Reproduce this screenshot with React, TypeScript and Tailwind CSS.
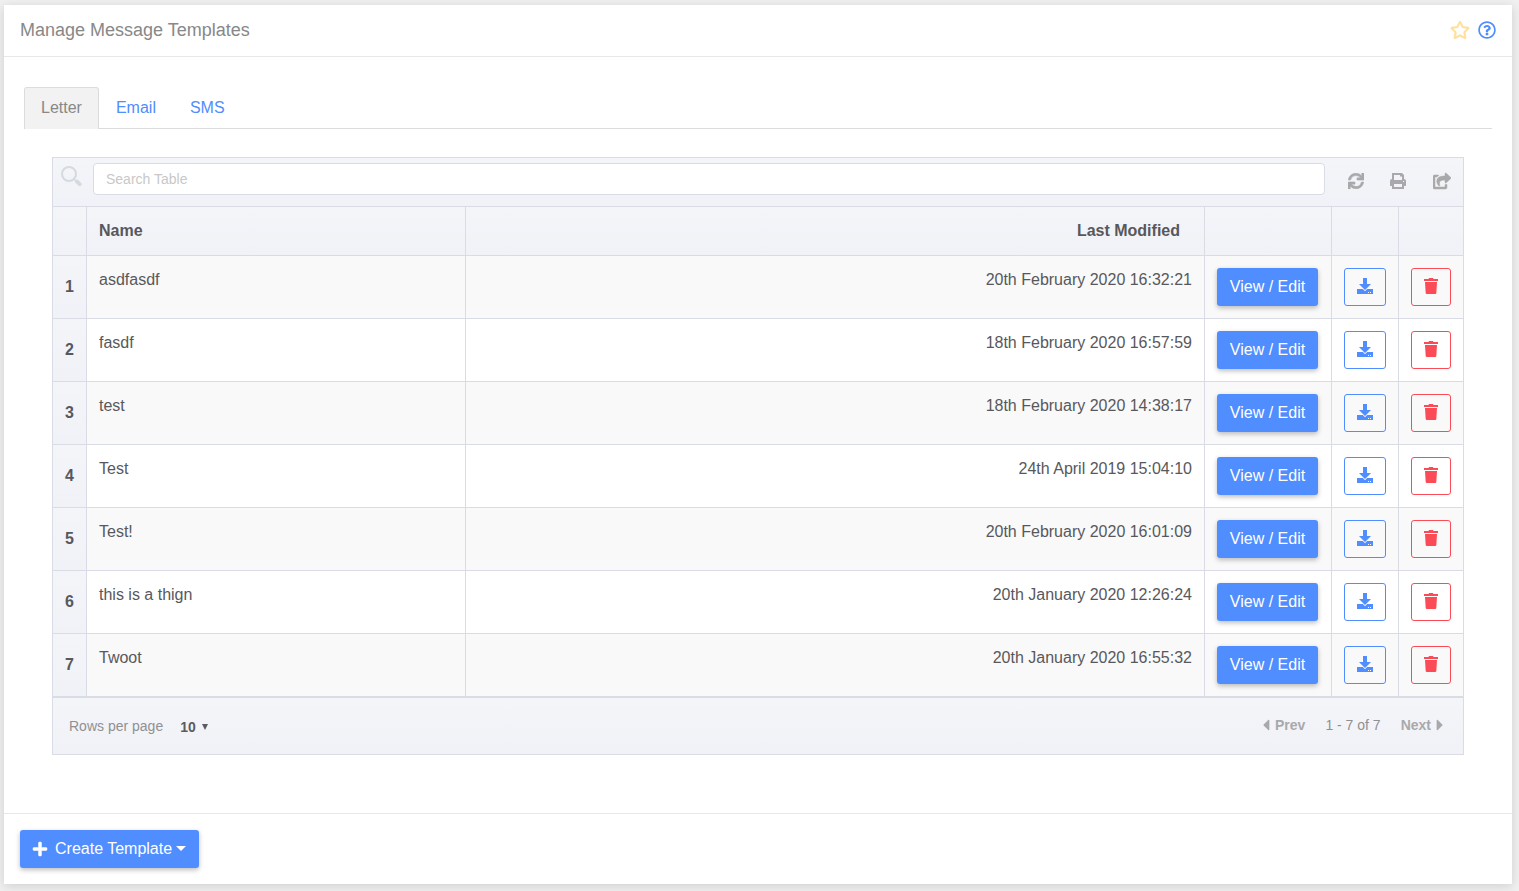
import {
  FaCaretLeft,
  FaCaretRight,
  FaPlus,
  FaRegQuestionCircle,
  FaRegStar,
  FaShareSquare,
  FaSync,
} from "react-icons/fa";

const templates = [
  { name: "asdfasdf", modified: "20th February 2020 16:32:21" },
  { name: "fasdf", modified: "18th February 2020 16:57:59" },
  { name: "test", modified: "18th February 2020 14:38:17" },
  { name: "Test", modified: "24th April 2019 15:04:10" },
  { name: "Test!", modified: "20th February 2020 16:01:09" },
  { name: "this is a thign", modified: "20th January 2020 12:26:24" },
  { name: "Twoot", modified: "20th January 2020 16:55:32" },
];

const primaryButton =
  "rounded-[3px] bg-[#508dfe] h-[38px] whitespace-nowrap text-white shadow-[0_2px_5px_rgba(0,0,0,0.26)]";
const iconButton = "flex h-[38px] w-full justify-center rounded-[3px] border pt-[9px]";
const shaded = "bg-linear-to-b from-[#f4f5f9] to-[#f1f2f7]";
const headCell = `border-r border-b border-[#d9dce5] ${shaded} px-3 py-3`;
const bodyCell = "border-r border-b border-[#d9dce5] px-3 py-3 align-top";

function DownloadIcon() {
  return (
    <svg viewBox="0 0 16 16" className="size-4" fill="currentColor" aria-hidden="true">
      <path d="M6 0h4v6h4l-6 6-6-6h4z" />
      <path
        fillRule="evenodd"
        d="M0 11h5.8L8 13.2 10.2 11H16v5H0zM11 14v1h1v-1zM13 14v1h1v-1z"
      />
    </svg>
  );
}

function TrashIcon() {
  return (
    <svg viewBox="0 0 14 16" className="h-4 w-[14px]" fill="currentColor" aria-hidden="true">
      <path d="M0 1h4.5L5 0h4l.5 1H14v2H0z" />
      <path d="M1 4h12l-.7 11q-.1 1-1.1 1H2.8q-1 0-1.1-1z" />
    </svg>
  );
}

function PrintIcon() {
  return (
    <svg viewBox="0 0 16 16" className="size-4" fill="currentColor" aria-hidden="true">
      <path
        fillRule="evenodd"
        d="M2 0h10l2 2v4q2 0 2 2v5h-2v3H2v-3H0V8q0-2 2-2zM4 2v5h8V3.5h-2V2zM4 11v3h8v-3zM13 8v1h1V8z"
      />
    </svg>
  );
}

function SearchIcon() {
  return (
    <svg viewBox="0 0 22 22" className="size-[22px]" fill="none" stroke="#d5d9e0" aria-hidden="true">
      <circle cx="8" cy="8" r="7" strokeWidth="2" />
      <path d="M13.2 13.2l2 2" strokeWidth="1.5" />
      <path d="M16 15.6l2.7 2.5" strokeWidth="4" strokeLinecap="round" />
    </svg>
  );
}

function Toolbar() {
  return (
    <div className={`flex h-[49px] items-start border-b border-[#d9dce5] ${shaded} pt-[5px] pr-3 pl-2`}>
      <label htmlFor="search" aria-label="Search" className="mt-[3px] mr-[10px] shrink-0">
        <SearchIcon />
      </label>
      <input
        id="search"
        type="text"
        aria-label="Search Table"
        placeholder="Search Table"
        className="h-8 min-w-0 flex-1 rounded-sm border border-[#d9dce5] bg-white px-3 text-sm outline-none placeholder:text-[#c8c8c8]"
      />
      <div className="ml-[21px] flex items-center gap-[22px] pt-[9px] text-[#a9a9ab]">
        <button type="button" aria-label="Refresh" className="flex w-5 justify-center">
          <FaSync size={16} stroke="currentColor" strokeWidth={20} />
        </button>
        <button type="button" aria-label="Print" className="flex w-5 justify-center">
          <PrintIcon />
        </button>
        <button type="button" aria-label="Export" className="flex w-[21px] justify-end">
          <FaShareSquare size={18} stroke="currentColor" strokeWidth={16} />
        </button>
      </div>
    </div>
  );
}

function TemplateTable() {
  return (
    <table className="w-full table-fixed border-separate border-spacing-0">
      <colgroup>
        <col className="w-[34px]" />
        <col className="w-[379px]" />
        <col />
        <col className="w-[127px]" />
        <col className="w-[67px]" />
        <col className="w-16" />
      </colgroup>
      <thead>
        <tr>
          <th className={headCell}></th>
          <th className={`${headCell} text-left`}>Name</th>
          <th className={`${headCell} pr-6 text-right`}>Last Modified</th>
          <th className={headCell}></th>
          <th className={headCell}></th>
          <th className={`border-b border-[#d9dce5] ${shaded}`}></th>
        </tr>
      </thead>
      <tbody>
        {templates.map((template, index) => (
          <tr key={template.name} className="odd:bg-[#f9f9f9]">
            <th className={`border-r border-b border-[#d9dce5] ${shaded} text-center`}>
              {index + 1}
            </th>
            <td className={bodyCell}>{template.name}</td>
            <td className={`${bodyCell} text-right`}>{template.modified}</td>
            <td className={bodyCell}>
              <button type="button" className={`${primaryButton} block w-[101px]`}>
                View / Edit
              </button>
            </td>
            <td className={bodyCell}>
              <button
                type="button"
                aria-label="Download"
                className={`${iconButton} border-[#508dfe] text-[#508dfe]`}
              >
                <DownloadIcon />
              </button>
            </td>
            <td className="border-b border-[#d9dce5] p-3 align-top">
              <button
                type="button"
                aria-label="Delete"
                className={`${iconButton} border-[#fb4b56] text-[#fb4b56]`}
              >
                <TrashIcon />
              </button>
            </td>
          </tr>
        ))}
      </tbody>
    </table>
  );
}

function Pagination() {
  return (
    <div className={`flex h-[57px] items-center justify-between border-t border-[#d9dce5] ${shaded} px-4 text-sm text-[#909092]`}>
      <div className="flex items-center">
        <label htmlFor="rows">Rows per page</label>
        <div className="relative ml-[17px] flex items-center">
          <select
            id="rows"
            defaultValue="10"
            className="w-8 appearance-none bg-transparent pt-px font-bold text-[#5b5b60] outline-none"
          >
            <option>10</option>
            <option>25</option>
            <option>50</option>
          </select>
          <svg
            viewBox="0 0 6 6"
            className="pointer-events-none absolute right-1 mt-px size-[6px] fill-[#5b5b60]"
            aria-hidden="true"
          >
            <path d="M0 0h6L3 6z" />
          </svg>
        </div>
      </div>
      <div className="flex items-center gap-5 pb-[2px]">
        <button type="button" className="flex items-center font-bold text-[#a9a9ab]">
          <FaCaretLeft size={18} />
          Prev
        </button>
        <span>1 - 7 of 7</span>
        <button type="button" className="flex items-center font-bold text-[#a9a9ab]">
          Next
          <FaCaretRight size={18} className="-mr-[2px]" />
        </button>
      </div>
    </div>
  );
}

export default function App() {
  return (
    <div className="min-h-screen bg-[#f0f0f0] pt-[5px] pr-[7px] pb-[7px] pl-1 font-['Liberation_Sans',Arial,sans-serif] text-base text-[#58585c]">
      <main className="bg-white shadow-[0_2px_10px_rgba(0,0,0,0.14)]">
        <header className="flex h-[52px] items-center justify-between border-b border-[#e8e8e8] px-4 pb-px">
          <h1 className="text-lg text-[#888]">Manage Message Templates</h1>
          <div className="flex items-center gap-2">
            <button type="button" aria-label="Add to favourites" className="text-[#ffe09a]">
              <FaRegStar size={20} stroke="currentColor" strokeWidth={12} />
            </button>
            <button type="button" aria-label="Help" className="text-[#508dfe]">
              <FaRegQuestionCircle size={18} />
            </button>
          </div>
        </header>

        <div className="px-5 pt-[30px] pb-[58px]">
          <nav className="flex border-b border-[#dcdcdc] text-[#508dfe]">
            <a
              href="#letter"
              className="-mb-px rounded-t-[3px] border border-b-0 border-[#dcdcdc] bg-[#f2f2f2] px-4 pt-2 pb-[9px] text-[#888]"
            >
              Letter
            </a>
            <a href="#email" className="border border-b-0 border-transparent px-4 py-2">
              Email
            </a>
            <a href="#sms" className="border border-b-0 border-transparent px-4 py-2">
              SMS
            </a>
          </nav>

          <section className="mx-7 mt-7 border border-[#d9dce5]">
            <Toolbar />
            <TemplateTable />
            <Pagination />
          </section>
        </div>

        <footer className="border-t border-[#e8e8e8] p-4">
          <button type="button" className={`${primaryButton} flex items-center px-3 pb-px`}>
            <FaPlus size={16} className="mr-[7px]" stroke="currentColor" strokeWidth={16} />
            Create Template
            <svg viewBox="0 0 10 5" className="mr-px ml-1 h-[5px] w-[10px] fill-white" aria-hidden="true">
              <path d="M0 0h10L5 5z" />
            </svg>
          </button>
        </footer>
      </main>
    </div>
  );
}
